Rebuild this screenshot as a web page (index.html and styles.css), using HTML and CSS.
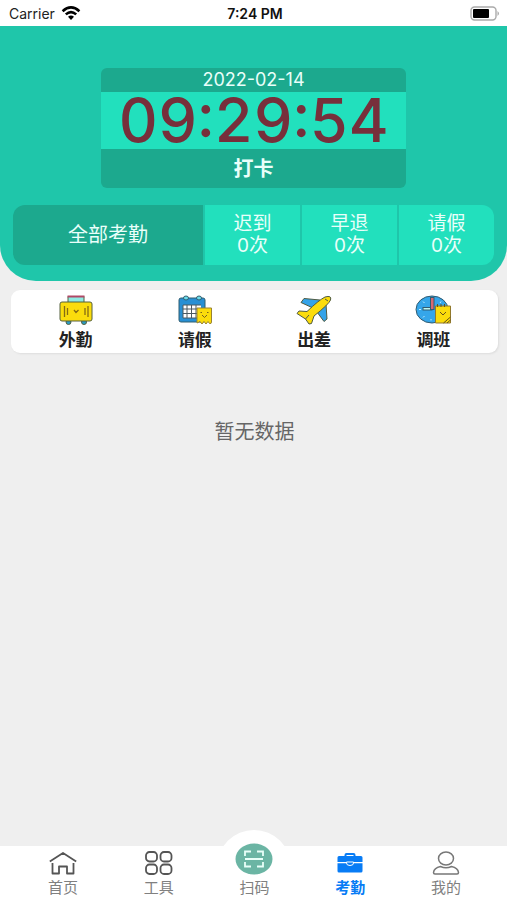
FILE: index.html
```html
<!DOCTYPE html>
<html lang="zh-CN">
<head>
<meta charset="utf-8">
<meta name="viewport" content="width=device-width, initial-scale=1">
<title>考勤</title>
<link rel="stylesheet" href="styles.css">
</head>
<body>
<div class="status">
  <div class="carrier">
    <span>Carrier</span>
    <svg width="20" height="14" viewBox="0 0 20 14" fill="none" stroke="#000" stroke-width="2.6">
      <path d="M1.6 5.2Q10-2.4 18.4 5.2M4.8 8.4Q10 3.8 15.2 8.4"/>
      <path d="M7 10.7Q10 8.2 13 10.7L10 14Z" fill="#000" stroke="none"/>
    </svg>
  </div>
  <span class="time">7:24 PM</span>
  <svg class="battery" width="31" height="15" viewBox="0 0 31 15">
    <rect x="1" y="1" width="25" height="13" rx="3.5" fill="#fff" stroke="#aaa" stroke-width="1.4"/>
    <rect x="3" y="3" width="16" height="9" rx="1" fill="#000"/>
    <path d="M27.5 5Q30.5 7.5 27.5 10Z" fill="#aaa"/>
  </svg>
</div>

<header class="hero">
  <section class="punch">
    <div class="date">2022-02-14</div>
    <div class="clock">09:29:54</div>
    <button class="punch-btn" type="button">打卡</button>
  </section>
  <section class="stats">
    <button class="stat all" type="button">全部考勤</button>
    <button class="stat" type="button"><span>迟到</span><span>0次</span></button>
    <button class="stat" type="button"><span>早退</span><span>0次</span></button>
    <button class="stat" type="button"><span>请假</span><span>0次</span></button>
  </section>
</header>

<main class="content">
  <nav class="actions">
    <a href="#out">
      <svg width="36" height="30" viewBox="0 0 36 30" stroke="#54603f" stroke-width="1">
        <ellipse cx="10.5" cy="27" rx="2.5" ry="2.5" fill="#299bc4"/>
        <ellipse cx="26" cy="27" rx="2.5" ry="2.5" fill="#299bc4"/>
        <path d="M10 7V1.5H26V7" fill="#8eeae2"/>
        <path d="M9.5 1.5H26.5" stroke="#b04866" stroke-width="2"/>
        <rect x="2" y="7" width="32" height="19" rx="2" fill="#fbdc0c"/>
        <path d="M6.5 11V22M9.5 13V20M30 11V22M27 13V20M16 15L18 17.5L20.5 15" fill="none" stroke="#866c13" stroke-width="1.3"/>
      </svg>
      <span>外勤</span>
    </a>
    <a href="#leave">
      <svg width="36" height="30" viewBox="0 0 36 30" stroke="#315e70" stroke-width="1">
        <rect x="2" y="3" width="26" height="24" rx="2" fill="#278fd4"/>
        <rect x="6" y="10" width="18" height="13" fill="#fff" stroke="none"/>
        <path d="M6 10H24M6 14H24M6 18.5H24M6 23H24M6 10V23M10 10V23M14.5 10V23M19 10V23" fill="none" stroke="#4b5961"/>
        <ellipse cx="9" cy="3" rx="2.5" ry="2" fill="#6cddec"/>
        <ellipse cx="22" cy="3" rx="2.5" ry="2" fill="#6cddec"/>
        <path d="M20 13H34.5V27Q34.5 29 32.5 28.5L31 26.5L29 29L27 26.5L25 29L23 26.5L20 28Z" fill="#fbdc0c" stroke="#998331"/>
        <path d="M23.5 17.5H25M30 17.5H31.5M25 20L27.5 22.5L30 20" fill="none" stroke="#79631b"/>
      </svg>
      <span>请假</span>
    </a>
    <a href="#trip">
      <svg width="36" height="30" viewBox="0 0 36 30" stroke="#4f5b42" stroke-width="1" stroke-linejoin="round">
        <path d="M24 5L8 3.5L5 7.5L17 13ZM30 9L31 24L28 26.5L21 17Z" fill="#34a3e9"/>
        <path d="M29 2Q36 0 34.5 5Q33 9 18 21L15.5 28.5L13 29L9.5 24L1 18.5L3 16L11 16.5Q23 5 29 2Z" fill="#fbdc0c"/>
        <path d="M29 4L32 6M9.5 24L13 20" fill="none"/>
      </svg>
      <span>出差</span>
    </a>
    <a href="#shift">
      <svg width="36" height="30" viewBox="0 0 36 30" stroke="#315b70" stroke-width="1">
        <ellipse cx="17" cy="14.5" rx="16" ry="13.5" fill="#35a6ea"/>
        <path d="M4 14.5H6M8 6.5L9.5 8M8 22.5L9.5 21M26 6.5L25 8M16 24V25.5" stroke="#c0edff"/>
        <rect x="8" y="12.5" width="9" height="2.5" fill="#bdf6f0"/>
        <rect x="15.5" y="2.5" width="3.5" height="12" fill="#d96970"/>
        <path d="M20.5 11H35.5V28H20.5Z" fill="#fbdc0c" stroke="#92792c"/>
        <path d="M22.5 12V9M26 12V9M29.5 12V9M25 17L28 20L31 17M28.5 28L35.5 22M32 28L35.5 25" fill="none" stroke="#66521c"/>
      </svg>
      <span>调班</span>
    </a>
  </nav>
  <p class="empty">暂无数据</p>
</main>

<nav class="tabs">
  <a href="#home">
    <svg width="28" height="24" viewBox="0 0 28 24" fill="none" stroke="#555" stroke-width="1.8" stroke-linejoin="round">
      <path d="M.8 10.5L14 2L27.2 10.5M3.5 12V22.5H10V15.5H18V22.5H24.5V12"/>
    </svg>
    <span>首页</span>
  </a>
  <a href="#tools">
    <svg width="28" height="24" viewBox="0 0 28 24" fill="none" stroke="#555" stroke-width="1.8">
      <rect x="1" y="1" width="11" height="9.5" rx="3.5"/><rect x="15.5" y="1" width="11" height="9.5" rx="3.5"/>
      <rect x="1" y="13.5" width="11" height="9.5" rx="3.5"/><rect x="15.5" y="13.5" width="11" height="9.5" rx="3.5"/>
    </svg>
    <span>工具</span>
  </a>
  <a href="#scan" class="scan">
    <svg width="38" height="32" viewBox="0 0 38 32" fill="none" stroke="#e9fff9" stroke-width="1.8">
      <ellipse cx="19" cy="16" rx="18.5" ry="15.5" fill="#6bb5a4" stroke="none"/>
      <path d="M16 8.5H10V13M22 8.5H28V13M10 19V23.5H16M28 19V23.5H22M10 16H28"/>
    </svg>
    <span>扫码</span>
  </a>
  <a href="#attendance" class="active" aria-current="page">
    <svg width="26" height="24" viewBox="0 0 26 24">
      <path d="M8.5 6V4Q8.5 3 9.5 3H16.5Q17.5 3 17.5 4V6" fill="none" stroke="#087cf5" stroke-width="2"/>
      <path d="M2 5H24Q25.5 5 25.5 6.5V11H.5V6.5Q.5 5 2 5ZM.5 12.2H25.5V20Q25.5 21.5 24 21.5H2Q.5 21.5 .5 20Z" fill="#087cf5"/>
      <path d="M9.5 11V12Q9.5 14.5 13 14.5T16.5 12V11Z" fill="#087cf5" stroke="#fff" stroke-width="1"/>
    </svg>
    <span>考勤</span>
  </a>
  <a href="#me">
    <svg width="28" height="24" viewBox="0 0 28 24" fill="none" stroke="#777" stroke-width="1.5">
      <ellipse cx="14" cy="7.5" rx="7.5" ry="6.5"/>
      <path d="M8.5 15.5Q2 17 1.5 21.5Q1.5 23 3 23H25Q26.5 23 26.5 21.5Q26 17 19.5 15.5Q14 18 8.5 15.5Z"/>
    </svg>
    <span>我的</span>
  </a>
</nav>
</body>
</html>
```
FILE: styles.css
```css
* {
  box-sizing: border-box;
}

body {
  margin: 0;
  min-height: 100vh;
  display: flex;
  flex-direction: column;
  background: #efefef;
  color: #222;
  font-family: Inter, "Noto Sans CJK SC", sans-serif;
}

a {
  color: inherit;
  text-decoration: none;
}

button {
  border: 0;
  padding: 0;
  color: inherit;
  font: inherit;
}

svg {
  display: block;
  flex-shrink: 0;
}

.status {
  display: grid;
  grid-template-columns: 1fr auto 1fr;
  align-items: center;
  height: 26px;
  padding: 0 6px 0 9px;
  background: #fff;
  font-size: 14px;
}

.carrier {
  display: flex;
  align-items: center;
  gap: 6px;
}

.time {
  font-weight: 600;
  color: #111;
}

.battery {
  justify-self: end;
}

.hero {
  padding: 42px 13px 16px;
  border-radius: 0 0 36px 36px;
  background: #1fc6aa;
  color: #e9fffa;
}

.punch {
  display: flex;
  flex-direction: column;
  width: 63.4%;
  margin: 0 auto 17px;
  overflow: hidden;
  border-radius: 6px;
  background: #1ca98e;
  text-align: center;
}

.date {
  font-size: 18px;
  line-height: 24px;
}

.clock {
  background: #22e0bd;
  color: #772f3b;
  font-size: 61px;
  font-weight: 500;
  line-height: 57px;
  font-variant-numeric: tabular-nums;
}

.punch-btn {
  height: 39px;
  background: transparent;
  font-size: 20px;
  font-weight: 700;
  line-height: 22px;
}

.stats {
  display: grid;
  grid-template-columns: 2fr 1fr 1fr 1fr;
  gap: 2px;
  overflow: hidden;
  border-radius: 12px;
}

.stat {
  display: flex;
  flex-direction: column;
  align-items: center;
  justify-content: center;
  height: 60px;
  background: #22e0bd;
  font-size: 19px;
  line-height: 22px;
}

.stat.all {
  background: #1ca98e;
  font-size: 20px;
}

.content {
  flex: 1;
  padding: 9px 9px 0 11px;
}

.actions {
  display: grid;
  grid-template-columns: repeat(4, 1fr);
  padding: 5px 5px 2px;
  border-radius: 9px;
  background: #fff;
  box-shadow: 1px 1px 2px #ddd;
}

.actions a {
  display: flex;
  flex-direction: column;
  align-items: center;
  gap: 4px;
  font-size: 17px;
  font-weight: 700;
  line-height: 22px;
}

.empty {
  margin: 67px 0 0;
  color: #666;
  font-size: 20px;
  line-height: 24px;
  text-align: center;
}

.tabs {
  display: grid;
  grid-template-columns: repeat(5, 1fr);
  grid-template-rows: 100%;
  height: 54px;
  padding: 0 13px 0 15px;
  background: #fff;
  color: #808080;
}

.tabs a {
  position: relative;
  display: flex;
  flex-direction: column;
  align-items: center;
  justify-content: flex-end;
  gap: 3px;
  padding-bottom: 2px;
  font-size: 15px;
  line-height: 20px;
}

.tabs .scan::before {
  content: "";
  position: absolute;
  top: -16px;
  left: 50%;
  width: 74px;
  height: 70px;
  margin-left: -37px;
  border-radius: 37px 37px 0 0;
  background: #fff;
}

.scan svg,
.scan span {
  position: relative;
}

.tabs .active {
  color: #087cf5;
  font-weight: 700;
}
```
